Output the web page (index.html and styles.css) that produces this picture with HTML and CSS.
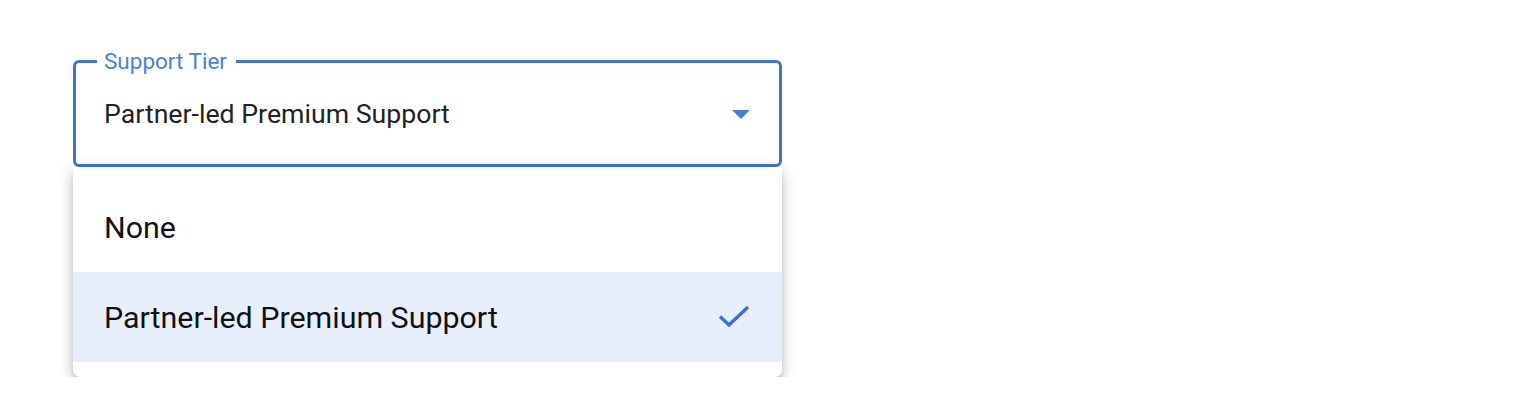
FILE: index.html
```html
<!DOCTYPE html>
<html lang="en">
<head>
    <meta charset="UTF-8">
    <meta name="viewport" content="width=device-width, initial-scale=1.0">
    <title>Support Tier</title>
    <link rel="stylesheet" href="styles.css">
</head>
<body>
    <div class="page">
        <div class="select">
            <fieldset class="field">
                <legend class="field-label">Support Tier</legend>
                <div class="field-row">
                    <span class="field-value">Partner-led Premium Support</span>
                    <svg class="arrow" width="18" height="9" viewBox="0 0 18 9">
                        <path d="M0 0 L18 0 L9 9 Z" fill="#4a7bd6"/>
                    </svg>
                </div>
            </fieldset>
            <ul class="menu">
                <li class="option">None</li>
                <li class="option selected">
                    <span>Partner-led Premium Support</span>
                    <svg class="check" width="32" height="24" viewBox="0 0 32 24">
                        <path d="M2 11.5 L11 20 L30 2" fill="none" stroke="#3f6fd3" stroke-width="3.4"/>
                    </svg>
                </li>
            </ul>
        </div>
    </div>
</body>
</html>
```
FILE: styles.css
```css
body {
    margin: 0;
    background: #fff;
    font-family: Roboto, "Liberation Sans", sans-serif;
}
.page {
    padding: 50px 0 0 73px;
}
.select {
    width: 709px;
    position: relative;
}
.field {
    margin: 0;
    padding: 0 28px 8px 28px;
    border: 3px solid #4673d2;
    border-radius: 6px;
}
.field-label {
    padding: 0 9px 0 7px;
    margin-left: -7px;
    color: #4a80de;
    font-size: 22.5px;
    line-height: 22px;
}
.field-row {
    display: flex;
    align-items: center;
    justify-content: space-between;
    height: 84px;
}
.field-value {
    color: #222;
    font-size: 26.7px;
}
.arrow {
    margin-right: 1px;
}
.menu {
    list-style-type: none;
    margin: 0;
    padding: 15px 0 15px;
    background: #fff;
    border-radius: 0 0 7px 7px;
    position: relative;
    z-index: 1;
    box-shadow: 0 5px 6px -3px rgba(0,0,0,.2), 0 8px 12px 1px rgba(0,0,0,.12), 0 3px 16px 2px rgba(0,0,0,.1);
}
.option {
    height: 90px;
    display: flex;
    align-items: center;
    justify-content: space-between;
    padding: 0 31px;
    font-size: 30.4px;
    color: #111;
}
.option.selected {
    background: #e8effc;
}
.check {
    margin-right: 1px;
}
```
